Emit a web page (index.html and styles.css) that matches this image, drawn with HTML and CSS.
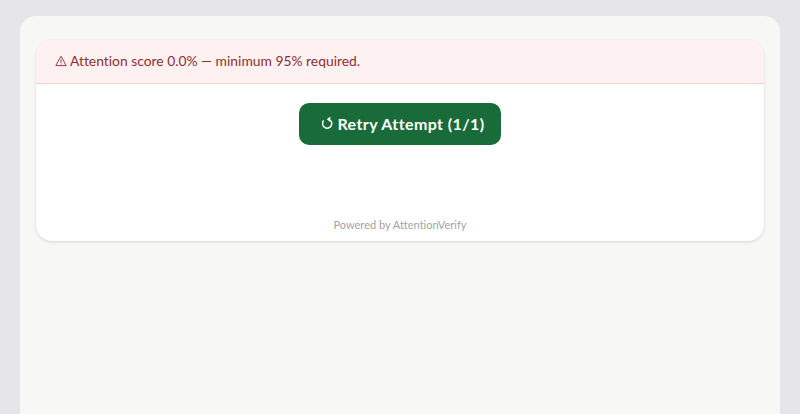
FILE: index.html
```html
<!DOCTYPE html>
<html lang="en">
<head>
<meta charset="utf-8">
<title>Attention Verify</title>
<link rel="stylesheet" href="styles.css">
</head>
<body>
<main class="sheet">
  <section class="card">
    <div class="banner">
      <svg class="warn" viewBox="0 0 12 12" aria-hidden="true"><path d="M6 1.2 11.2 10.6H.8Z"/><path d="M6 4.4V7.8M6 8.6V9.5"/></svg>
      <span>Attention score 0.0% — minimum 95% required.</span>
    </div>
    <div class="actions">
      <button class="retry" type="button">
        <svg class="redo" viewBox="0 0 12 12" aria-hidden="true"><path d="M1.6 3.6A4.6 4.6 0 1 0 6.6 2.2"/><path d="M8.4.4 6 2.2 8.4 4.2"/></svg>
        <span>Retry Attempt (1/1)</span>
      </button>
    </div>
    <p class="powered">Powered by AttentionVerify</p>
  </section>
</main>
</body>
</html>
```
FILE: styles.css
```css
* { box-sizing: border-box; }
html, body { height: 100%; }
body {
  margin: 0;
  padding: 16px 20px 0;
  background: #e5e5ea;
  font-family: Lato, "DejaVu Sans", sans-serif;
  font-variant-ligatures: none;
  overflow: hidden;
}
.sheet {
  height: 100%;
  padding: 24px 16px 0;
  background: #f7f7f5;
  border-radius: 16px 16px 0 0;
}
.card {
  height: 201px;
  display: flex;
  flex-direction: column;
  background: #fff;
  border-radius: 16px;
  box-shadow: 0 1px 3px rgba(0, 0, 0, .14);
  overflow: hidden;
}
.banner {
  height: 44px;
  padding: 0 19px 2px;
  display: flex;
  align-items: center;
  gap: 3px;
  background: #fef1f1;
  border-bottom: 1px solid #fad4d4;
  color: #8f2f2f;
  font-size: 13.85px;
}
.warn {
  width: 12px;
  height: 12px;
  fill: none;
  stroke: #8f2f2f;
  stroke-width: .9;
}
.actions {
  display: flex;
  justify-content: center;
  padding-top: 19px;
}
.retry {
  width: 202px;
  height: 42px;
  padding: 0 0 2px 7px;
  display: flex;
  align-items: center;
  justify-content: center;
  gap: 3px;
  border: 0;
  border-radius: 10px;
  background: #196b3a;
  color: #fff;
  font: 700 16px Lato, "DejaVu Sans", sans-serif;
  font-variant-ligatures: none;
  letter-spacing: .4px;
}
.redo {
  width: 12px;
  height: 12px;
  fill: none;
  stroke: #fff;
  stroke-width: 1.5;
}
.powered {
  margin: auto 0 8px;
  text-align: center;
  color: #a3a3a3;
  font-size: 11px;
  line-height: 16px;
}
```
